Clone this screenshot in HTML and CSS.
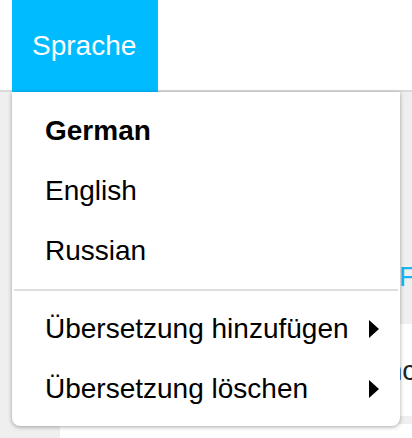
FILE: index.html
```html
<!DOCTYPE html>
<html lang="de">
<head>
    <meta charset="utf-8">
    <title>Sprache</title>
    <meta name="viewport" content="width=device-width, initial-scale=1">
    <link rel="stylesheet" href="styles.css">
</head>
<body>
<div class="topbar">
    <a class="lang-btn" href="#">Sprache</a>
</div>

<div class="main">
    <div class="toolbar">
        <a class="toolbar-link" href="#">Filter</a>
    </div>
    <div class="card">
        <span class="card-text">Synchronisieren</span>
    </div>
    <div class="panel"></div>
</div>

<!-- dropdown of the Sprache button -->
<ul class="lang-menu">
    <li class="lang-item active">German</li>
    <li class="lang-item">English</li>
    <li class="lang-item">Russian</li>
    <li class="lang-sep"></li>
    <li class="lang-item">Übersetzung hinzufügen <span class="caret"></span></li>
    <li class="lang-item">Übersetzung löschen <span class="caret"></span></li>
</ul>
</body>
</html>
```

FILE: styles.css
```css
body {
    margin: 0;
    font: 28px "Liberation Sans", Arial, sans-serif;
    color: #000;
    background: #efefef;
    overflow: hidden;
}

.topbar {
    display: flex;
    height: 90px;
    background: #fff;
    border-bottom: 2px solid #dadada;
}

.lang-btn {
    display: block;
    width: 146px;
    height: 92px;
    margin-left: 12px;
    padding-left: 20px;
    box-sizing: border-box;
    font-size: 28px;
    line-height: 92px;
    color: #fff;
    text-decoration: none;
    background: #00bbff;
}

.main {
    padding-left: 60px;
}

.toolbar {
    margin-top: 169px;
    margin-bottom: 31px;
    padding-left: 339px;
    line-height: 32px;
    white-space: nowrap;
}

.toolbar-link {
    color: #19b4f2;
    text-decoration: none;
}

.card {
    height: 92px;
    padding-top: 31px;
    padding-left: 294px;
    box-sizing: border-box;
    line-height: 32px;
    white-space: nowrap;
    background: #fff;
    color: #222;
}

.panel {
    height: 40px;
    margin-top: 8px;
    background: #fff;
}

.lang-menu {
    position: absolute;
    top: 92px;
    left: 12px;
    width: 388px;
    margin: 0;
    padding: 9px 0 7px;
    box-sizing: border-box;
    list-style: none;
    background: #fff;
    border-radius: 0 0 8px 8px;
    box-shadow: 0 1px 4px rgba(0, 0, 0, 0.35);
}

.lang-item {
    display: flex;
    align-items: center;
    justify-content: space-between;
    height: 60px;
    padding: 0 21px 0 33px;
    line-height: 60px;
}

.lang-item.active {
    font-weight: bold;
}

.lang-sep {
    height: 2px;
    margin: 8px 2px;
    background: #dedede;
}

.caret {
    width: 0;
    height: 0;
    border-left: 10px solid #000;
    border-top: 9px solid transparent;
    border-bottom: 9px solid transparent;
}
```
